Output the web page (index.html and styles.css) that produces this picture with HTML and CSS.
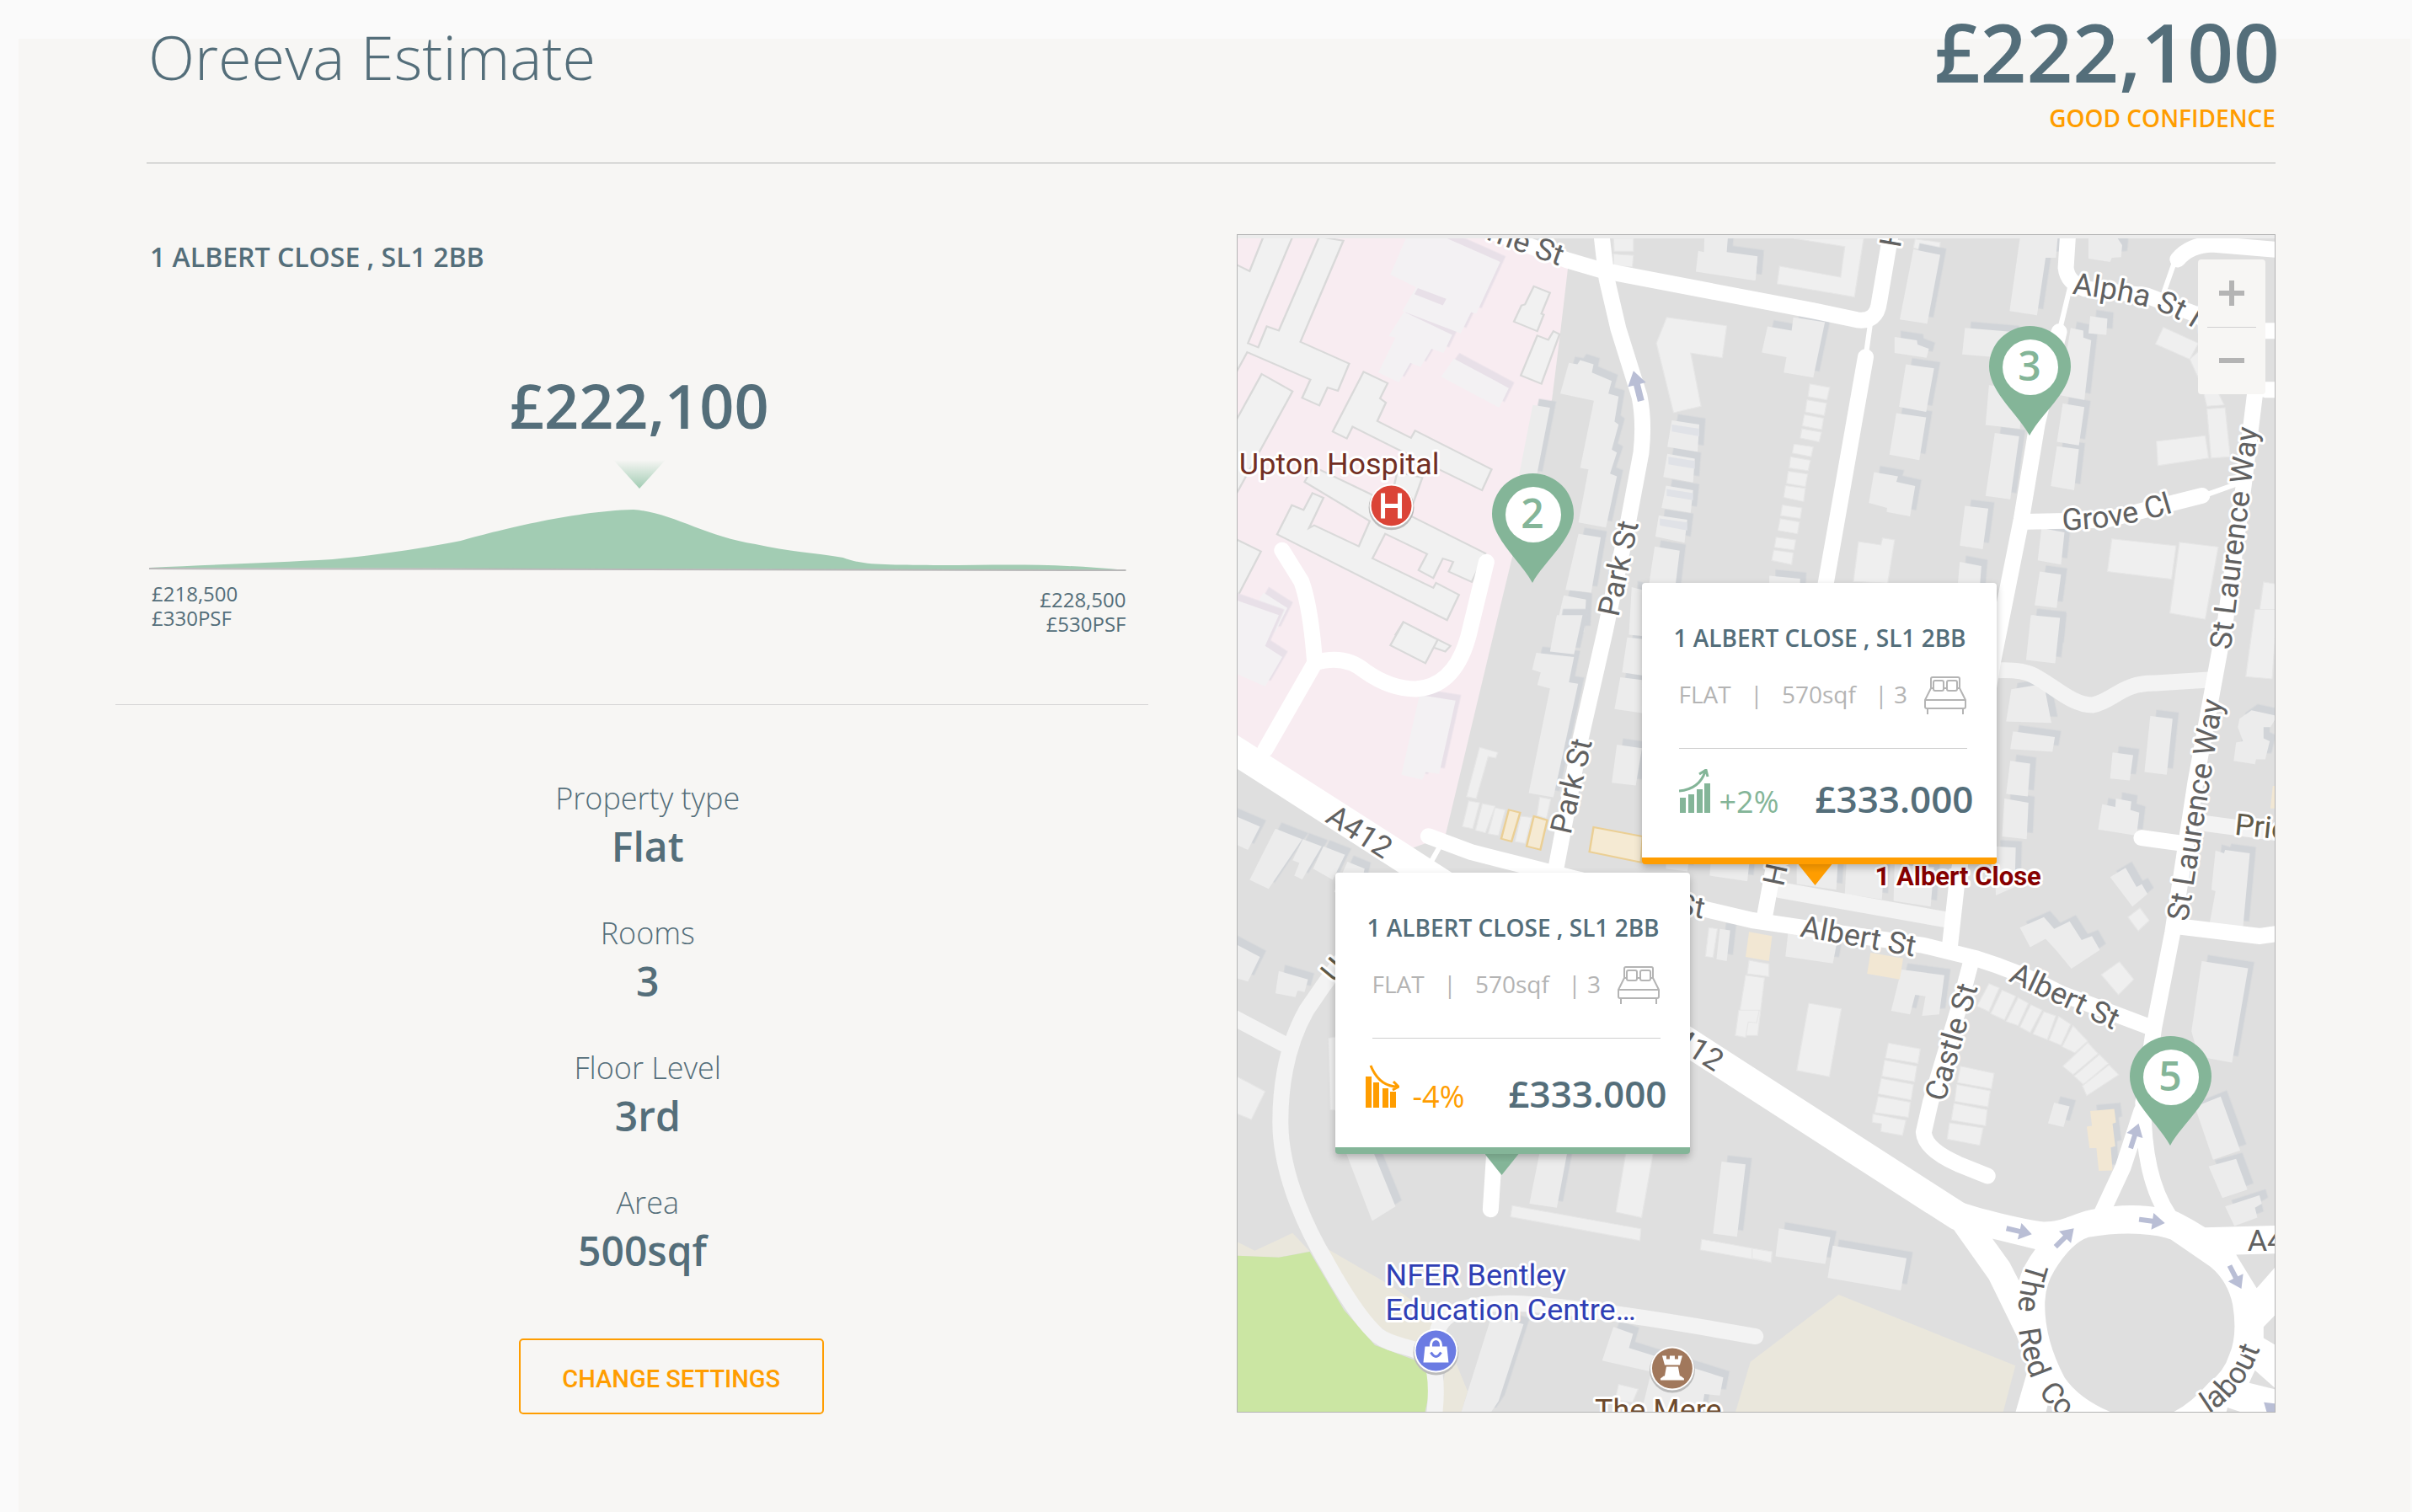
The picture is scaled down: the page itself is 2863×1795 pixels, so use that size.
FILE: index.html
```html
<!DOCTYPE html>
<html lang="en">
<head>
<meta charset="utf-8">
<meta name="viewport" content="width=device-width, initial-scale=1">
<title>Oreeva Estimate</title>
<link rel="stylesheet" href="styles.css">
</head>
<body>
<main class="panel">
  <header class="header">
    <h1 class="title">Oreeva Estimate</h1>
    <div class="headline">
      <p class="headline-price">£222,100</p>
      <p class="confidence">GOOD CONFIDENCE</p>
    </div>
  </header>

  <div class="content">
    <section class="summary">
      <h2 class="address">1 ALBERT CLOSE , SL1 2BB</h2>
      <div class="range">
        <p class="range-price">£222,100</p>
        <svg class="range-marker" viewBox="0 0 62 34" aria-hidden="true">
          <defs><linearGradient id="fade" x1="0" y1="0" x2="0" y2="1"><stop offset="0" stop-color="#a2ccb3" stop-opacity="0"/><stop offset="1" stop-color="#a2ccb3"/></linearGradient></defs>
          <path d="M0 0H62L31 34Z" fill="url(#fade)"/>
        </svg>
        <svg class="range-curve" viewBox="0 0 1160 73" preserveAspectRatio="none" aria-hidden="true">
          <path d="M0 69C80 65 150 63 218 59C270 54 330 45 370 37C410 26 500 2 575 0C620 3 660 32 720 41C760 50 790 51 824 57C850 67 880 65 940 66C1010 66 1070 63 1160 72Z" fill="#a2ccb3"/>
          <path d="M0 70L1160 72" stroke="#b8b8b8" stroke-width="2"/>
        </svg>
        <div class="range-ends">
          <p>£218,500<br>£330PSF</p>
          <p class="range-high">£228,500<br>£530PSF</p>
        </div>
      </div>
      <dl class="facts">
        <div><dt>Property type</dt><dd>Flat</dd></div>
        <div><dt>Rooms</dt><dd>3</dd></div>
        <div><dt>Floor Level</dt><dd>3rd</dd></div>
        <div><dt>Area</dt><dd>500sqf&nbsp;</dd></div>
      </dl>
      <div class="actions"><button type="button" class="change">CHANGE SETTINGS</button></div>
    </section>

    <section class="map" aria-label="Map of nearby properties">
      <svg class="map-art" viewBox="1468 278 1234 1400" preserveAspectRatio="xMidYMid slice">
        <rect x="1468" y="278" width="1234" height="1400" fill="#dfdfdf"/>
        <path fill="#f8ecf1" d="M1468 278H1800L1862 308L1852 393L1842 473L1795 660L1778 730L1715 993L1676 1007L1468 873Z"/>

        <!-- Buildings: north west -->
        <g transform="translate(1460 270) scale(.40816 .33333)">
          <g class="ward">
            <path d="M510 36H630L785 120L715 305L700 300L670 375L500 295L540 210L465 165ZM505 298L645 380L620 445L585 430L553 495L523 480L490 550L430 515L480 390L460 385ZM650 465L810 570L782 640L613 530ZM95 1300L165 1355L130 1440H30Z"/>
          </g>
          <path fill="#e8e0e8" d="M545 213L628 252L618 275L535 235Z"/>
          <g class="hospital">
            <path d="M95 30H180L50 410L80 425L105 350L140 365L258 30L328 44L203 405L345 483L312 580L282 568L258 632L208 605L232 540L48 442L0 550V120L55 153Z"/>
            <path d="M90 520L180 582L22 935L0 980V720ZM387 512L457 553L435 607L452 622L427 688L525 748L537 722L760 860L732 935L480 785L355 708L338 750L297 725Z"/>
            <path d="M485 870L558 890L520 1020L460 1000Z"/>
            <path d="M240 850L410 950L440 1000L530 1030L742 1160L702 1262L635 1225L648 1190L618 1178L590 1248L547 1220L572 1162L450 1090L413 1178L590 1283L598 1265L665 1308L630 1398L135 1092L178 988L212 1005L238 945L270 962L228 1070L243 1060L373 1135L405 1045L215 905Z"/>
            <path d="M0 1100L88 1153L0 1360ZM883 207L930 230L905 305L912 308L893 367L825 333L847 275L857 272ZM893 383L925 398L940 367L958 378L905 555L845 525ZM503 1405L640 1490L625 1510L480 1450Z"/>
          </g>
          <g class="tall">
            <path d="M880 630L930 640L890 890L840 880ZM985 480L1010 485L1018 470L1057 485L1052 515L1110 545L1100 590L1130 600L1118 690L1130 700L1110 790L1125 800L1105 875L1125 885L1093 1068L1013 1050L1042 860L1018 855L1058 615L960 590ZM1013 1090L1078 1103L1050 1300L975 1290ZM970 1310L1035 1325L1030 1440H945Z"/>
            <path d="M1285 685L1365 700L1360 797L1272 780ZM1272 805L1352 822L1347 907L1260 887ZM1268 918L1347 935L1340 1015L1255 998ZM1247 1025L1330 1040L1322 1122L1237 1100ZM1235 1135L1308 1150L1293 1300H1215ZM1380 36H1448L1445 85L1535 100L1528 187L1355 155L1362 80L1378 85Z"/>
          </g>
          <path class="roof" d="M1285 700L1365 715V742L1285 725ZM1275 815L1352 830V858L1275 842ZM1270 930L1347 945V970L1270 955ZM1250 1035L1330 1050V1078L1250 1060Z"/>
          <path class="low" d="M1270 318L1445 348L1432 462L1340 445L1370 635L1290 658L1240 410ZM1115 36H1173V82H1117ZM1115 92L1173 97L1170 138L1115 133Z"/>
        </g>

        <!-- Buildings: north east -->
        <g transform="translate(2080 270) scale(.40816 .33333)">
          <path class="low" d="M120 36H325L298 245L73 198L80 135L258 175L270 65ZM310 1118L375 1130L380 1105L415 1112L395 1266L295 1260ZM168 555L226 568L218 612L163 600ZM160 612L217 624L210 668L155 655ZM152 665L208 678L203 718L146 705ZM145 715L202 728L195 762L140 748ZM122 770L178 780L172 815L117 802ZM112 815L170 828L163 865L108 855ZM105 867L162 877L155 922L100 910ZM97 918L155 928L150 975L92 960ZM88 987L145 998L140 1035L83 1025ZM82 1036L138 1048L132 1090L75 1078ZM70 1102L127 1112L122 1148L65 1138ZM63 1148L120 1158L115 1200L57 1185Z"/>
          <path class="low" d="M1198 353L1300 410L1275 467L1175 413ZM1178 760L1320 740L1330 820L1182 847ZM1325 645L1378 640L1393 815L1337 820ZM1275 467L1300 440L1375 630L1325 635L1310 560ZM1048 1108L1235 1133L1222 1252L1035 1225ZM1245 1120L1358 1137L1320 1395L1217 1373ZM1490 1262L1530 1270V1440H1470ZM475 38L548 50L545 95L470 70Z"/>
          <g class="tall">
            <path d="M470 75L548 95L510 340L430 325ZM45 350L115 365L120 318L212 335L178 533L92 515L100 460L28 443ZM0 105L15 110L10 185L0 180ZM415 388L480 400L482 415L515 430L508 462L415 445ZM448 485L530 500L507 655L428 637ZM420 660L507 675L487 827L400 808ZM355 870L425 885L420 905L475 920L460 1028L392 1012L393 998L340 980ZM50 1240L140 1250L138 1300H50Z"/>
            <path d="M780 36H890L885 105L855 105L830 310L750 295ZM620 355L760 370V465L612 450ZM690 560L790 575L780 715L680 702ZM707 730L778 742L752 967L680 955ZM620 990L688 1000L672 1145L605 1132ZM605 1190L668 1205L662 1300H597ZM980 36H1065L1078 60L1075 103L1048 105L1043 120L980 108ZM928 355L965 365V390L988 400L968 612L895 595ZM985 313L1035 322L1032 380L980 375ZM905 625L968 638L952 775L888 762ZM888 778L952 788L938 935L870 920ZM843 1070L910 1085L900 1200L832 1185ZM838 1225L900 1235L887 1355L823 1345ZM815 1380L898 1395L890 1500H808Z"/>
          </g>
        </g>

        <!-- Buildings: west -->
        <g transform="translate(1460 730) scale(.40816 .33333)">
          <g class="ward"><path d="M0 -60L140 0L100 110L150 150L100 255L0 200ZM550 285L655 305L607 567L568 560L558 588L497 570Z"/></g>
          <path class="hospital" d="M503 25L603 88L567 172L465 108Z"/>
          <path class="low" d="M725 472L778 490L772 510L750 505L715 655L687 648ZM693 663L725 670L705 762L675 755ZM733 673L770 682L742 777L713 768ZM770 688L800 695L780 787L750 780ZM845 718L877 722L858 815L828 808ZM900 650L932 657L920 725L892 715ZM1393 1115L1418 1120L1405 1222L1383 1218ZM1510 1232L1568 1245V1290L1505 1280ZM1500 1285L1555 1295L1535 1500H1472Z"/>
          <path class="shop" d="M810 695L843 705L818 808L788 798ZM883 718L922 732L902 837L862 825ZM1057 757L1200 790L1195 882L1045 845Z"/>
          <g class="tall">
            <path d="M950 0H1025L1000 140L930 130ZM890 135L1000 150L985 240L1012 245L940 650L868 635L930 262L893 250L903 205L878 195ZM1168 -100L1198 -90V75L1160 70ZM1155 80L1198 85V215L1140 205ZM1135 222L1198 232V350L1118 335ZM1125 462L1198 475L1180 608L1110 598Z"/>
            <path d="M0 710L85 755L50 838L0 810ZM130 762L208 800L110 977L55 945ZM210 800L265 825L208 943L185 930L200 885L180 875ZM270 825L333 855L297 945L240 905ZM340 880L390 905L380 960L300 990ZM0 1165L85 1220L50 1308L0 1290ZM140 1270L225 1300L215 1345L195 1340L188 1363L130 1350ZM1425 1120L1455 1125L1445 1235L1415 1228ZM1400 860L1512 870L1505 950L1395 930ZM1268 870L1335 880L1330 915L1268 905Z"/>
          </g>
          <path class="shop-plain" d="M1510 1130L1577 1145L1568 1235L1500 1220Z"/>
        </g>

        <!-- Buildings: east -->
        <g transform="translate(2080 730) scale(.40816 .33333)">
          <g class="tall">
            <path d="M812 0L897 10L883 172L798 160ZM755 265L850 245L872 385L740 380ZM760 415L882 435L875 488L752 478ZM752 520L810 530L803 647L740 638ZM735 655L805 670L800 800L728 790ZM705 825L768 830L765 970L710 1000ZM1160 360L1225 370L1208 570L1143 560ZM1050 490L1110 500L1100 590L1043 583ZM1020 675L1058 685L1060 655L1105 665L1102 695L1128 705L1120 787L1008 765ZM1088 902L1120 970L1135 960L1152 995L1108 1040L1043 935ZM780 1115L850 1078L880 1120L925 1093L960 1160L990 1145L1013 1195L930 1262L885 1195L855 1155L810 1185Z"/>
            <path d="M1350 840L1375 850L1378 838L1450 850L1430 1115L1333 1100L1350 985L1338 980ZM1310 1235L1445 1260L1398 1597L1300 1575L1280 1485ZM1455 340L1530 360L1510 400H1490V440L1508 450L1495 515H1468L1465 532L1403 520L1410 455L1430 450L1415 400L1420 370ZM130 870L250 880L245 980L130 960ZM275 880L385 890L378 1015L270 995ZM415 890L530 900L520 1040L412 1020ZM105 1130L250 1150L235 1243L97 1218ZM435 1265L560 1285L545 1425L495 1430L505 1360L475 1355L460 1425L405 1412Z"/>
          </g>
          <path class="low" d="M1130 1045L1157 1090L1125 1127L1095 1078ZM1070 1237L1112 1300L1067 1355L1017 1283ZM1465 -20H1530L1515 228L1438 220ZM165 1385L260 1405L225 1647L130 1625Z"/>
          <path class="shop-plain" d="M345 1205L440 1225L430 1300L335 1280ZM1517 610H1530V690H1510Z"/>
        </g>

        <!-- Buildings: south west -->
        <g transform="translate(1460 1200) scale(.40816 .33333)">
          <path fill="#eae7dc" d="M0 815L70 858L180 795L230 860L140 882L0 875ZM265 840L470 985L600 1100L560 1210L480 1170L400 1100ZM630 1260L650 1240L690 1360L670 1440H600Z"/>
          <path fill="#cbe6a3" d="M0 875L140 882L230 862L330 1070L420 1195L540 1250L590 1295L565 1440H0Z"/>
          <path class="low" d="M0 225L100 290L60 390L0 360ZM1155 480H1235L1197 740L1122 720ZM820 697L1195 780L1192 822L815 737ZM1372 817L1577 862L1574 900L1368 855ZM1480 0H1540L1532 45L1508 42L1500 97L1470 90ZM285 100L330 90V360L290 355Z"/>
          <g class="tall">
            <path d="M330 490L410 490L480 700L412 752ZM903 490H983L950 705L870 690ZM1430 540L1500 550L1475 808L1405 797ZM760 1090L853 1120L780 1395L755 1440H670ZM1115 1130L1172 1155L1160 1205L1435 1310L1425 1375L1380 1370L1370 1440H1195L1225 1290L1082 1250Z"/>
          </g>
          <path class="low" d="M1130 1335L1187 1352L1170 1400L1120 1390Z"/>
        </g>

        <!-- Buildings: south east -->
        <g transform="translate(2080 1200) scale(.40816 .33333)">
          <path fill="#eae7dc" d="M252 1015L767 1268L730 1440H-50L-5 1255Z"/>
          <path class="low" d="M397 117L490 138L483 190L388 170ZM386 178L480 200L473 255L378 235ZM376 243L470 265L463 320L367 298ZM367 308L461 328L455 382L357 365ZM352 370L448 393L438 447L375 433L377 405L350 400ZM607 200L705 225L697 280L598 258ZM596 265L694 288L687 345L590 325ZM588 332L685 355L680 412L580 392ZM575 402L673 420L663 482L568 460ZM0 850L58 862L55 900L0 885Z"/>
          <path class="low" d="M690 -95L720 -80L690 5L655 -15ZM728 -72L768 -50L735 35L695 12ZM775 -45L805 -25L775 55L740 40ZM812 -20L845 0L810 80L780 60ZM850 5L885 20L860 105L818 85ZM893 22L928 50L900 125L865 107ZM935 55L978 110L940 152L903 130ZM978 115L1008 155L935 230L905 200ZM1012 158L1038 190L965 265L938 235ZM1040 195L1068 230L975 305L962 270Z"/>
          <g class="tall">
            <path d="M880 330L925 343L907 417L862 403ZM1290 345L1365 308L1422 500L1343 533ZM1330 557L1410 530L1443 640L1370 670ZM1378 700L1478 660L1485 690L1465 705L1472 740L1405 770ZM78 778L228 810L213 905L68 878ZM235 840L450 885L433 1000L220 955Z"/>
            <path fill="#f2e7d3" d="M985 360L1055 352L1060 400L1050 405L1058 485L1045 490L1050 572L1010 573L1003 492H983L975 415L990 412Z"/>
          </g>
        </g>

        <!-- Minor roads -->
        <g class="road minor">
          <path d="M2366 796Q2400 794 2415 802C2440 815 2460 837 2485 837C2510 832 2520 810 2560 811L2623 807M2113 1057L2309 1092M2612 977L2702 989"/>
          <path d="M1640 1080Q1590 1140 1550 1200Q1519 1255 1519 1333C1519 1400 1556 1470 1574 1500Q1610 1565 1635 1587C1655 1602 1680 1598 1698 1615Q1708 1640 1701 1690M1460 1207L1523 1240M1705 1590Q1705 1545 1807 1549Q1900 1555 2084 1588"/>
        </g>
        <!-- Streets -->
        <g class="road">
          <path d="M1760 270L1860 308L1901 320L2153 368L2205 379Q2228 382 2231 358L2246 270"/>
          <path d="M1900 270L1907 330L1921 390L1946 470Q1952 500 1948 537L1933 617L1905 750L1876 877L1846 1035"/>
          <path d="M2215 423L2168 690L2094 1093"/>
          <path d="M2456 270L2453 317Q2455 335 2476 342L2549 350L2607 372L2640 392H2710M2690 462H2710"/>
          <path d="M2445 393L2419 503L2400 617L2366 787L2323 1053L2315 1125M2341 1140L2325 1200L2292 1310L2284 1345Q2285 1365 2325 1383L2360 1397"/>
          <path d="M2586 307Q2600 290 2627 289L2710 296M2405 619L2500 617L2615 588"/>
          <path d="M2680 450L2664 580L2643 735L2607 930L2580 1107L2558 1220L2545 1310Q2545 1400 2576 1445M2543 1320L2521 1387L2494 1445"/>
          <path d="M2584 1100L2684 1112L2710 1108M2543 995L2594 1002"/>
          <path d="M1695 993L1746 1012L1868 1043L2080 1093L2284 1123L2345 1138Q2400 1155 2447 1180L2553 1220"/>
          <path d="M1521 653L1544 690Q1555 720 1560 787L1501 890M1560 787Q1595 776 1620 797Q1650 818 1680 818Q1730 815 1745 745L1764 667M1774 1360L1769 1437"/>
          <path class="lane" d="M2221 380L2215 423M2458 340L2446 390M2584 305L2570 345M2620 587L2662 572M1707 1008L1698 1024"/>
          <path class="trunk" d="M1440 875L1660 1016L2080 1287L2325 1445"/>
        </g>
        <g transform="translate(2080 1200) scale(.40816 .33333)">
          <path fill="#fff" d="M560 650L600 680C650 705 800 750 850 755C910 755 930 725 995 710Q1115 680 1230 715C1260 730 1300 760 1320 775L1530 768V1440H766L805 1275L770 1160L690 960L580 770L520 715Z"/>
          <path fill="#dfdfdf" d="M700 815L825 853Q790 910 777 965L750 900ZM1410 872L1530 868V908L1470 992ZM1530 1080L1490 1130V1170L1530 1198ZM1465 1285L1530 1355L1448 1330ZM862 1405L900 1440H855ZM1385 1418L1440 1440H1380Z"/>
          <path fill="#dfdfdf" d="M1095 797Q1180 798 1220 818L1335 915Q1385 965 1400 1050Q1415 1160 1390 1230Q1375 1290 1330 1330Q1260 1430 1190 1450H1080Q960 1400 910 1310Q850 1170 853 1040Q855 980 880 930Q930 830 980 810Q1040 797 1095 797Z"/>
        </g>

        <g fill="#b9bed5">
          <path d="M-4 20V0H-11L0 -17L11 0H4V20Z" transform="translate(1943 456) rotate(-14)"/>
          <path d="M-3 16V0H-10L0 -15L10 0H3V16Z" transform="translate(2535 1349) rotate(18)"/>
          <path d="M-3 16V0H-10L0 -15L10 0H3V16Z" transform="translate(2398 1463) rotate(103)"/>
          <path d="M-3 16V0H-10L0 -15L10 0H3V16Z" transform="translate(2452 1470) rotate(45)"/>
          <path d="M-3 16V0H-10L0 -15L10 0H3V16Z" transform="translate(2556 1451) rotate(98)"/>
          <path d="M-3 16V0H-10L0 -15L10 0H3V16Z" transform="translate(2655 1518) rotate(153)"/>
          <path d="M-3 16V0H-10L0 -15L10 0H3V16Z" transform="translate(2700 1676) rotate(-50)"/>
        </g>

        <!-- Labels -->
        <defs>
          <path id="alpha" d="M2460 348Q2515 354 2551 364T2640 412"/>
          <path id="grove" d="M2449 629Q2520 628 2590 605"/>
          <path id="redcow" d="M2408 1499Q2386 1560 2406 1622T2490 1706"/>
          <path id="about" d="M2560 1704Q2655 1685 2684 1602"/>
        </defs>
        <g class="street">
          <text transform="translate(1763 283) rotate(20)">rne St</text>
          <text transform="translate(1921 733) rotate(-78)">Park St</text>
          <text transform="translate(1864 992) rotate(-77)">Park St</text>
          <text transform="translate(1571 975) rotate(33)">A412</text>
          <text transform="translate(1965 1228) rotate(33)">A412</text>
          <text transform="translate(2256 294) rotate(-80)">H</text>
          <text transform="translate(2117 1054) rotate(-78)">Ho</text>
          <text><textPath href="#alpha">Alpha St N</textPath></text>
          <text><textPath href="#grove">Grove Cl</textPath></text>
          <text transform="translate(2649 772) rotate(-83)">St Laurence Way</text>
          <text transform="translate(2598 1095) rotate(-81)">St Laurence Way</text>
          <text transform="translate(1885 1067) rotate(10)">Albert St</text>
          <text transform="translate(2136 1112) rotate(10)">Albert St</text>
          <text transform="translate(2384 1165) rotate(25)">Albert St</text>
          <text transform="translate(2309 1310) rotate(-74)">Castle St</text>
          <text x="2669" y="1486">A4</text>
          <text><textPath href="#redcow">The</textPath></text>
          <text><textPath href="#redcow" startOffset="82">Red</textPath></text>
          <text><textPath href="#redcow" startOffset="160">Co</textPath></text>
          <text text-anchor="end"><textPath href="#about" startOffset="100%">labout</textPath></text>
          <text class="path-name" transform="translate(2653 991) rotate(6)">Prio</text>
          <text class="path-name" transform="translate(1584 1169) rotate(-50)">Up</text>
        </g>
        <g class="place">
          <text x="1470" y="563" fill="#722f24">Upton Hospital</text>
          <text x="1644" y="1527" fill="#303fb5">NFER Bentley</text>
          <text x="1644" y="1568" fill="#303fb5">Education Centre…</text>
          <text x="1893" y="1688" fill="#6d4a2c">The Mere</text>
          <text class="home" x="2226" y="1051">1 Albert Close</text>
        </g>

        <g transform="translate(1651 600)">
          <circle cy="2" r="27" fill="#bbb"/><circle r="26" fill="#fff"/><circle r="24" fill="#db4437"/>
          <path d="M-10 -15V15M10 -15V15M-10 0H10" stroke="#fff" stroke-width="5"/>
        </g>
        <g transform="translate(1704 1605)">
          <circle cy="2" r="27" fill="#bbb"/><circle r="26" fill="#fff"/><circle r="24" fill="#6b7be3"/>
          <path d="M-13 -5H13L15 14H-15Z" fill="#fff"/>
          <path d="M-6 -4V-7A6 7 0 0 1 6 -7V-4" fill="none" stroke="#fff" stroke-width="3"/>
          <path d="M-6 2Q0 12 6 2" fill="none" stroke="#6b7be3" stroke-width="3"/>
        </g>
        <g transform="translate(1985 1626)">
          <circle cy="2" r="27" fill="#bbb"/><circle r="26" fill="#fff"/><circle r="24" fill="#a1785c"/>
          <path d="M-12 -15H-7V-11H-3V-15H3V-11H7V-15H12L9 -4H-9ZM-7 -2H7L9 9H-9ZM-10 9H10L14 12V14H-14V12Z" fill="#fff"/>
        </g>
        <rect x="1468" y="278" width="1234" height="4" fill="#ececec"/>
      </svg>

      <button type="button" class="pin pin-2"><svg viewBox="0 0 97 130" aria-hidden="true"><path d="M48 130C34 104 0 78 0 48A48.500 48 0 0 1 97 48C97 78 62 104 48 130Z"/><circle cx="49" cy="49" r="33"/></svg><span>2</span></button>
      <button type="button" class="pin pin-3"><svg viewBox="0 0 97 130" aria-hidden="true"><path d="M48 130C34 104 0 78 0 48A48.500 48 0 0 1 97 48C97 78 62 104 48 130Z"/><circle cx="49" cy="49" r="33"/></svg><span>3</span></button>
      <button type="button" class="pin pin-5"><svg viewBox="0 0 97 130" aria-hidden="true"><path d="M48 130C34 104 0 78 0 48A48.500 48 0 0 1 97 48C97 78 62 104 48 130Z"/><circle cx="49" cy="49" r="33"/></svg><span>5</span></button>

      <article class="card card-up">
        <h3>1 ALBERT CLOSE , SL1 2BB</h3>
        <p class="meta"><span>FLAT</span><span>|</span><span>570sqf</span><span class="beds">| 3</span>
          <svg class="bed" viewBox="0 0 50 45" aria-hidden="true"><path d="M8 15V3Q8 1 10 1H40Q42 1 42 3V15M23 14H27M9 14H11M39 14H41M8 14L1 28V36Q1 38 3 38H47Q49 38 49 36V28L42 14M1 28H49M4 38V45M46 38V45"/><rect x="11" y="5" width="12" height="12" rx="2"/><rect x="27" y="5" width="12" height="12" rx="2"/></svg>
        </p>
        <div class="stats">
          <svg class="trend" viewBox="0 0 40 52" aria-hidden="true"><path class="bars" d="M1 34H8V52H1ZM11 30H18V52H11ZM21 24H28V52H21ZM30 17H37V52H30Z"/><path class="line" d="M0 26Q24 24 31 3M24 6L32 1L34 9"/></svg>
          <span class="change-rate">+2%</span><span class="price">£333.000</span>
        </div>
      </article>
      <article class="card card-down">
        <h3>1 ALBERT CLOSE , SL1 2BB</h3>
        <p class="meta"><span>FLAT</span><span>|</span><span>570sqf</span><span class="beds">| 3</span>
          <svg class="bed" viewBox="0 0 50 45" aria-hidden="true"><path d="M8 15V3Q8 1 10 1H40Q42 1 42 3V15M23 14H27M9 14H11M39 14H41M8 14L1 28V36Q1 38 3 38H47Q49 38 49 36V28L42 14M1 28H49M4 38V45M46 38V45"/><rect x="11" y="5" width="12" height="12" rx="2"/><rect x="27" y="5" width="12" height="12" rx="2"/></svg>
        </p>
        <div class="stats">
          <svg class="trend" viewBox="0 0 40 52" aria-hidden="true"><path class="bars" d="M0 15H7V52H0ZM9 22H16V52H9ZM20 29H27V52H20ZM29 33H36V52H29Z"/><path class="line" d="M6 2Q16 27 38 27M33 21L39 27L32 31"/></svg>
          <span class="change-rate">-4%</span><span class="price">£333.000</span>
        </div>
      </article>

      <div class="zoom">
        <button type="button" aria-label="Zoom in"><svg viewBox="0 0 30 30" aria-hidden="true"><path d="M15 0V30M0 15H30"/></svg></button>
        <button type="button" aria-label="Zoom out"><svg viewBox="0 0 30 30" aria-hidden="true"><path d="M0 15H30"/></svg></button>
      </div>
    </section>
  </div>
</main>
</body>
</html>
```
FILE: styles.css
```css
:root {
  --slate: #546e7a;
  --green: #84b598;
  --orange: #ff9d00;
  --grey: #b4b4b4;
  --paper: #f7f6f4;
}
* { box-sizing: border-box; }
body {
  margin: 0;
  background: #fafafa;
  color: var(--slate);
  font-family: "Open Sans", sans-serif;
}
h1, h2, h3, p, dl, dd { margin: 0; }
button { font: inherit; color: inherit; cursor: pointer; }

.panel {
  display: flow-root;
  margin: 46px 2px 0 22px;
  padding: 0 160px 117px 152px;
  min-height: calc(100vh - 46px);
  background: var(--paper);
}
.header {
  display: flex;
  justify-content: space-between;
  align-items: flex-start;
  margin-top: -33px;
  padding-bottom: 33px;
  border-bottom: 1px solid var(--grey);
}
.title {
  padding: 6px 0 0 2px;
  font-size: 72px;
  line-height: 96px;
  font-weight: 300;
}
.headline { text-align: right; }
.headline-price { margin-right: -5px; font-size: 96px; line-height: 96px; font-weight: 600; }
.confidence {
  margin-top: 12px;
  padding-bottom: 1px;
  color: var(--orange);
  font-size: 28px;
  line-height: 38px;
  font-weight: 600;
}

.content {
  display: grid;
  grid-template-columns: 1163fr 1234fr;
  column-gap: 131px;
  align-items: start;
  margin-top: 84px;
}

/* Estimate summary */
.address {
  padding: 5px 0 0 4px;
  font-size: 32px;
  line-height: 44px;
  font-weight: 600;
}
.range {
  display: flex;
  flex-direction: column;
  align-items: center;
  padding: 105px 0 80px 3px;
}
.range-price { padding-left: 4px; font-size: 72px; line-height: 98px; font-weight: 600; }
.range-marker { width: 62px; height: 34px; margin: 16px 0 0 5px; }
.range-curve { width: 100%; height: 73px; margin-top: 25px; }
.range-ends {
  display: flex;
  justify-content: space-between;
  width: 100%;
  margin-top: 12px;
  padding: 0 0 1px 3px;
  font-size: 24px;
  line-height: 29px;
}
.range-high { margin-top: 7px; text-align: right; }
.facts {
  display: grid;
  row-gap: 46px;
  margin: 0 -26px 0 -37px;
  padding: 87px 0 71px 38px;
  border-top: 1px solid #d6d6d6;
  text-align: center;
}
.facts dt { font-size: 36px; line-height: 48px; font-weight: 300; }
.facts dd { font-size: 48px; line-height: 66px; font-weight: 600; }
.actions { padding-left: 83px; text-align: center; }
.change {
  width: 362px;
  height: 90px;
  padding: 5px 0 0;
  border: 2px solid var(--orange);
  border-radius: 5px;
  background: none;
  color: var(--orange);
  font: 500 29px/34px Roboto, sans-serif;
}

/* Map */
.map {
  position: relative;
  aspect-ratio: 1234 / 1400;
  border: 1px solid var(--grey);
  overflow: hidden;
}
.map-art {
  display: block;
  width: 100%;
  height: 100%;
  font-family: Roboto, sans-serif;
  font-size: 36px;
}
.ward { fill: #f3f1f3; filter: drop-shadow(16px -20px 0 #e8e0e8); }
.hospital { fill: #f1f1f1; stroke: #d9d9d9; stroke-width: 6px; }
.tall { fill: #ececec; filter: drop-shadow(18px -22px 0 #d1d4d8); }
.low { fill: #efefef; stroke: #e6e6e6; stroke-width: 3px; }
.roof { fill: #e0e2e7; }
.shop { fill: #f5ead3; stroke: #ebcf94; stroke-width: 6px; }
.shop-plain { fill: #f2e7d3; }
.road { fill: none; stroke: #fff; stroke-width: 19px; stroke-linecap: round; stroke-linejoin: round; }
.minor { stroke: #f3f3f3; }
.lane { stroke-width: 6px; }
.trunk { stroke-width: 34px; }
.street, .place { stroke: #fff; stroke-width: 6px; stroke-linejoin: round; paint-order: stroke; }
.street { fill: #616161; }
.path-name { fill: #605a48; }
.home { fill: #870000; font-size: 31px; font-weight: 700; }

.pin {
  position: absolute;
  width: 97px;
  height: 130px;
  padding: 0;
  border: 0;
  background: none;
  color: var(--green);
}
.pin svg { display: block; fill: var(--green); }
.pin circle { fill: #fff; }
.pin span {
  position: absolute;
  inset: 14px 0 auto;
  font-size: 48px;
  line-height: 66px;
  font-weight: 600;
}
.pin-2 { left: 302px; top: 283px; }
.pin-3 { left: 892px; top: 108px; }
.pin-5 { left: 1059px; top: 951px; }

.card {
  position: absolute;
  width: 421px;
  height: 334px;
  padding: 46px 29px 0 38px;
  border-bottom: 8px solid var(--accent);
  border-radius: 4px;
  background: #fff;
  box-shadow: 0 4px 10px rgba(0, 0, 0, .25);
}
.card::after {
  content: "";
  position: absolute;
  top: 100%;
  left: var(--pointer);
  width: 40px;
  height: 25px;
  margin-top: 8px;
  background: linear-gradient(rgba(0, 0, 0, .12), transparent 10px) var(--accent);
  clip-path: polygon(0 0, 100% 0, 50% 100%);
}
.card-up { --accent: var(--orange); --trend: var(--green); --pointer: 186px; left: 480px; top: 413px; }
.card-down { --accent: var(--green); --trend: var(--orange); --pointer: 178px; left: 116px; top: 757px; }
.card h3 {
  color: var(--slate);
  font-size: 28px;
  line-height: 38px;
  font-weight: 600;
  white-space: nowrap;
}
.meta {
  display: flex;
  align-items: center;
  justify-content: space-between;
  width: 342px;
  height: 98px;
  margin: 14px 0 0 6px;
  padding-bottom: 30px;
  color: var(--grey);
  font-size: 28px;
  line-height: 38px;
}
.meta .beds { margin-right: -2px; white-space: nowrap; }
.bed { width: 50px; height: 45px; margin-top: 2px; fill: none; stroke: var(--grey); stroke-width: 2px; }
.stats {
  display: flex;
  align-items: baseline;
  width: 342px;
  margin-left: 6px;
  padding-top: 24px;
  border-top: 1px solid #cfcfcf;
  white-space: nowrap;
}
.card-down .stats { padding-top: 30px; }
.trend { width: 40px; height: 52px; }
.card-down .trend { margin: 0 8px 0 -8px; }
.bars { fill: var(--trend); }
.line { fill: none; stroke: var(--trend); stroke-width: 3px; }
.change-rate { margin-left: 8px; color: var(--trend); font-size: 36px; line-height: 48px; }
.price { margin: 0 -8px 0 auto; color: var(--slate); font-size: 44px; line-height: 60px; font-weight: 600; }

.zoom {
  position: absolute;
  top: 29px;
  right: 11px;
  display: grid;
  width: 80px;
  height: 160px;
  padding: 0 11px;
  border-radius: 4px;
  background: var(--paper);
}
.zoom button { display: grid; place-items: center; padding: 0; border: 0; background: none; }
.zoom button + button { border-top: 1px solid #d0d0d0; }
.zoom svg { width: 30px; height: 30px; stroke: var(--grey); stroke-width: 6px; }
```
